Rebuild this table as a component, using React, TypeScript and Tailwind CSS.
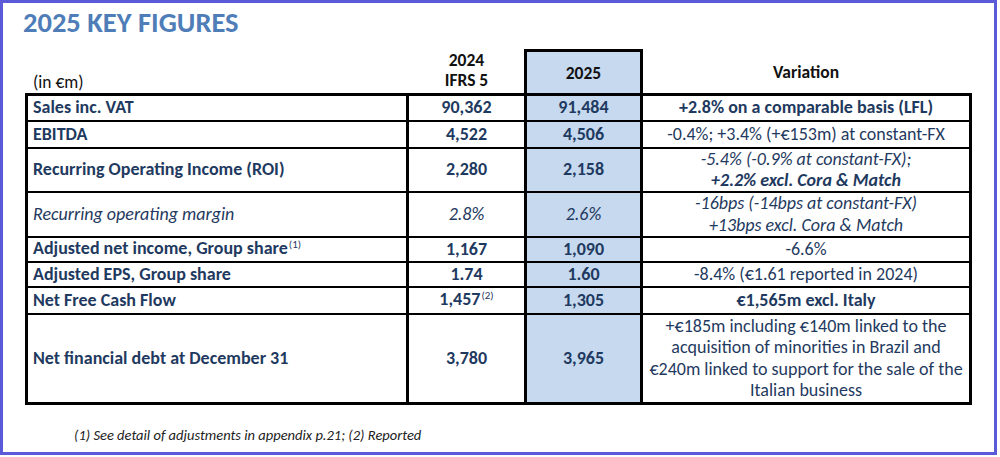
import React from 'react';

// Key figures slide - single table with a highlighted 2025 column

const font = { fontFamily: 'Carlito, Lato, "Noto Sans", sans-serif' };

type Row = {
  label: React.ReactNode;
  y2024: React.ReactNode;
  y2025: React.ReactNode;
  variation: React.ReactNode;
  italic?: boolean;
  h: string;
};

const Sup = ({ children }: { children: React.ReactNode }) => (
  <span className="text-[11px] font-normal relative -top-[6px] ml-[1px]">{children}</span>
);

const rows: Row[] = [
  {
    label: 'Sales inc. VAT',
    y2024: '90,362',
    y2025: '91,484',
    variation: <span className="font-bold">+2.8% on a comparable basis (LFL)</span>,
    h: 'h-[24px]',
  },
  {
    label: 'EBITDA',
    y2024: '4,522',
    y2025: '4,506',
    variation: '-0.4%; +3.4% (+€153m) at constant-FX',
    h: 'h-[25px]',
  },
  {
    label: 'Recurring Operating Income (ROI)',
    y2024: '2,280',
    y2025: '2,158',
    variation: (
      <>
        <span className="italic">-5.4% (-0.9% at constant-FX);</span>
        <br />
        <span className="italic font-bold">+2.2% excl. Cora &amp; Match</span>
      </>
    ),
    h: 'h-[42px]',
  },
  {
    label: 'Recurring operating margin',
    y2024: '2.8%',
    y2025: '2.6%',
    variation: (
      <>
        -16bps (-14bps at constant-FX)
        <br />
        +13bps excl. Cora &amp; Match
      </>
    ),
    italic: true,
    h: 'h-[43px]',
  },
  {
    label: (
      <>
        Adjusted net income, Group share<Sup>(1)</Sup>
      </>
    ),
    y2024: '1,167',
    y2025: '1,090',
    variation: '-6.6%',
    h: 'h-[23px]',
  },
  {
    label: 'Adjusted EPS, Group share',
    y2024: '1.74',
    y2025: '1.60',
    variation: '-8.4% (€1.61 reported in 2024)',
    h: 'h-[23px]',
  },
  {
    label: 'Net Free Cash Flow',
    y2024: (
      <>
        1,457<Sup>(2)</Sup>
      </>
    ),
    y2025: '1,305',
    variation: <span className="font-bold">€1,565m excl. Italy</span>,
    h: 'h-[25px]',
  },
  {
    label: 'Net financial debt at December 31',
    y2024: '3,780',
    y2025: '3,965',
    variation: (
      <>
        +€185m including €140m linked to the
        <br />
        acquisition of minorities in Brazil and
        <br />
        €240m linked to support for the sale of the
        <br />
        Italian business
      </>
    ),
    h: 'h-[87px]',
  },
];

export default function App() {
  return (
    <div className="w-[1000px] h-[457px] bg-white" style={font}>
      <div className="w-[997px] h-[455px] border-[3px] border-[#5b5bd9] flex flex-col">
        <h1 className="ml-[20px] mt-[4px] text-[28.5px] leading-[32px] font-bold text-[#4f7db8]">
          2025 KEY FIGURES
        </h1>

        {/* column headers */}
        <div className="ml-[22px] mt-[10px] w-[947px] grid grid-cols-[378px_115px_113px_326px] gap-x-[3px] px-[3px] h-[44px] text-[#111] text-[17.5px]">
          <div className="flex items-end pl-[5px] pb-[1px] leading-[20px]">(in €m)</div>
          <div className="flex flex-col items-center justify-center font-bold leading-[20px] pb-[3px]">
            <span>2024</span>
            <span>IFRS 5</span>
          </div>
          <div className="-mx-[3px] border-x-[3px] border-t-[3px] border-black bg-[#c6d9ef] flex items-center justify-center font-bold pt-[2px]">
            2025
          </div>
          <div className="flex items-center justify-center font-bold pt-[2px]">Variation</div>
        </div>

        {/* table body */}
        <div className="ml-[22px] w-[947px] bg-black p-[3px] grid grid-cols-[378px_115px_113px_326px] gap-x-[3px] gap-y-[2px] text-[18px] text-[#1f3a60] leading-[21.5px]">
          {rows.map((r, i) => (
            <React.Fragment key={i}>
              <div className={`${r.h} bg-white flex items-center pl-[5px] whitespace-nowrap ${r.italic ? 'italic' : 'font-bold'}`}>
                <span>{r.label}</span>
              </div>
              <div className={`${r.h} bg-white flex items-center justify-center whitespace-nowrap ${r.italic ? 'italic' : 'font-bold'}`}>
                <span>{r.y2024}</span>
              </div>
              <div className={`${r.h} bg-[#c6d9ef] flex items-center justify-center ${r.italic ? 'italic' : 'font-bold'}`}>
                <span>{r.y2025}</span>
              </div>
              <div className={`${r.h} bg-white flex items-center justify-center text-center whitespace-nowrap ${r.italic ? 'italic' : ''}`}>
                <span>{r.variation}</span>
              </div>
            </React.Fragment>
          ))}
        </div>

        <p className="ml-[71px] mt-[20px] italic text-[14.5px] text-[#222]">
          (1) See detail of adjustments in appendix p.21; (2) Reported
        </p>
      </div>
    </div>
  );
}
